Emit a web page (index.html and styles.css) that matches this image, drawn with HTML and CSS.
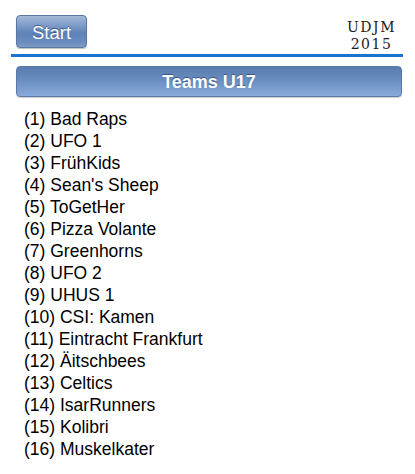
FILE: index.html
```html
<!DOCTYPE html>
<html>
<head>
<meta charset="utf-8">
<link rel="stylesheet" href="styles.css">
</head>
<body>
<div class="top">
  <button class="start">Start</button>
  <div class="brand"><div>UDJM</div><div>2015</div></div>
</div>
<div class="rule"></div>
<div class="bar">Teams U17</div>
<ul class="teams">
  <li>(1) Bad Raps</li>
  <li>(2) UFO 1</li>
  <li>(3) FrühKids</li>
  <li>(4) Sean's Sheep</li>
  <li>(5) ToGetHer</li>
  <li>(6) Pizza Volante</li>
  <li>(7) Greenhorns</li>
  <li>(8) UFO 2</li>
  <li>(9) UHUS 1</li>
  <li>(10) CSI: Kamen</li>
  <li>(11) Eintracht Frankfurt</li>
  <li>(12) Äitschbees</li>
  <li>(13) Celtics</li>
  <li>(14) IsarRunners</li>
  <li>(15) Kolibri</li>
  <li>(16) Muskelkater</li>
</ul>
</body>
</html>
```
FILE: styles.css
```css
html, body {
  margin: 0;
  padding: 0;
  background: #ffffff;
  font-family: "Liberation Sans", Arial, sans-serif;
}
.top {
  display: flex;
  justify-content: space-between;
  align-items: flex-start;
  padding: 15px 19px 0 16px;
  height: 39px;
}
.start {
  width: 71px;
  height: 33px;
  box-sizing: border-box;
  border: 1px solid #5a77a3;
  border-radius: 4px;
  background: linear-gradient(to bottom, #a3b8d8 0%, #7f9cc8 30%, #5f83b8 55%, #6a8cbe 85%, #7d9ac4 100%);
  color: #ffffff;
  font-family: "Liberation Sans", Arial, sans-serif;
  font-size: 18.5px;
  line-height: 31px;
  padding: 1px 0 0 0;
  text-shadow: 0 -1px 1px rgba(40, 60, 100, 0.7);
  box-shadow: 0 1px 1px rgba(0, 0, 0, 0.25);
}
.brand {
  font-family: "DejaVu Serif", serif;
  font-size: 14px;
  line-height: 16.5px;
  text-align: center;
  color: #1a1a1a;
  margin-top: 4px;
  letter-spacing: 1.5px;
}
.rule {
  height: 3px;
  background: #1a73cf;
  margin: 0 12px 0 11px;
}
.bar {
  margin: 9px 13px 0 16px;
  height: 31px;
  box-sizing: border-box;
  border: 1px solid #5b78a6;
  border-radius: 4px;
  background: linear-gradient(to bottom, #5a7db0 0%, #6a8dc0 45%, #7d9fd0 80%, #8aacdc 100%);
  color: #ffffff;
  font-weight: bold;
  font-size: 18px;
  line-height: 31px;
  text-align: center;
  text-shadow: 0 -1px 1px rgba(30, 50, 90, 0.6);
  box-shadow: 0 1px 1px rgba(0, 0, 0, 0.2);
}
.teams {
  list-style: none;
  margin: 11px 0 0 0;
  padding: 0 0 0 24px;
  font-size: 17.5px;
  line-height: 22px;
  color: #000;
}
```
